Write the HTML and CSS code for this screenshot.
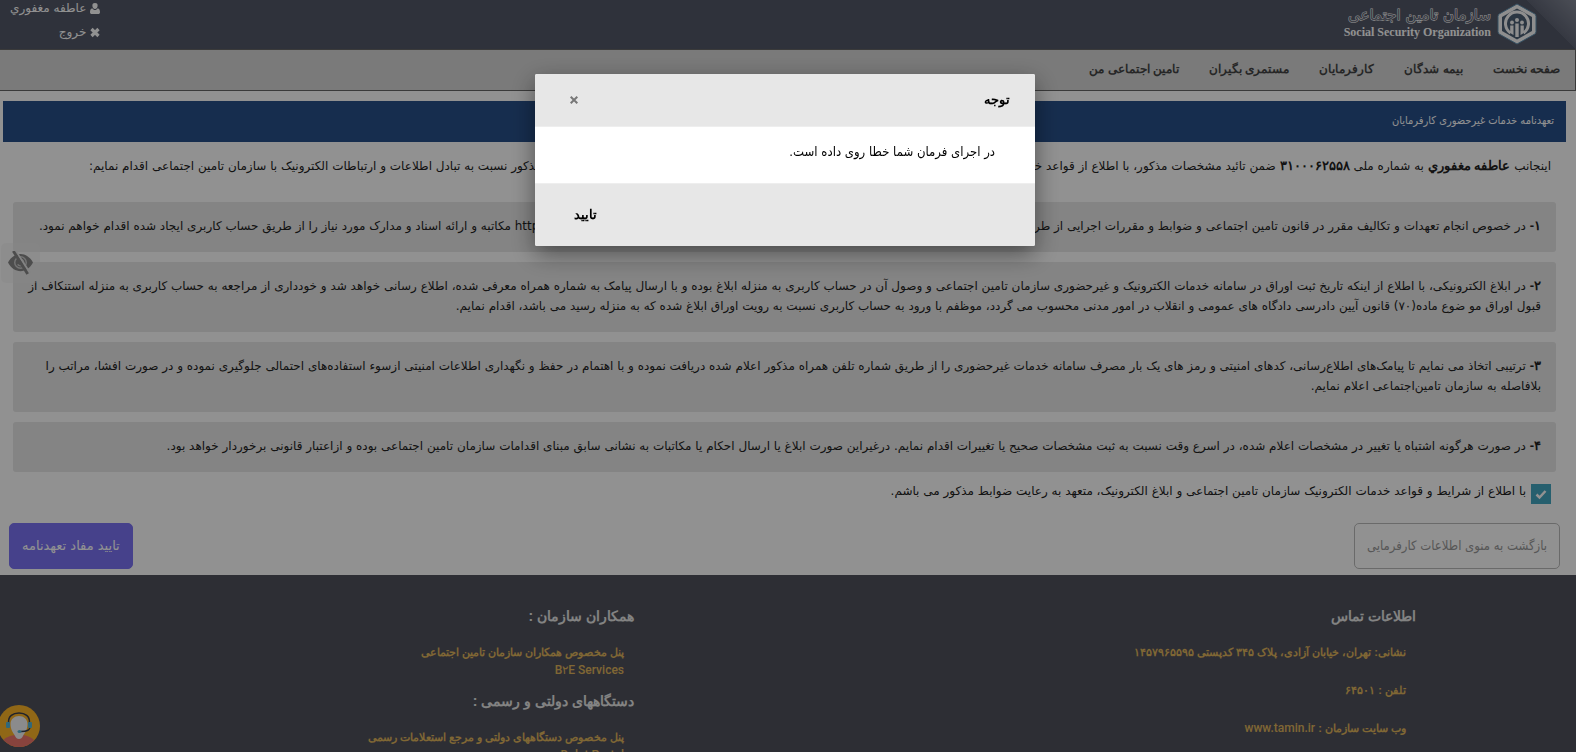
FILE: index.html
```
<!DOCTYPE html>
<html lang="fa" dir="rtl">
<head>
<meta charset="utf-8">
<title>سازمان تامین اجتماعی</title>
<link rel="stylesheet" href="styles.css">
</head>
<body>
<header class="top">
  <div class="brand">
    <svg class="brand-mark" viewBox="0 0 40 42" aria-hidden="true">
      <path d="M20 1 37 10.500a3 3 0 0 1 2 3v15a3 3 0 0 1-2 3L20 41 3 31.500a3 3 0 0 1-2-3v-15a3 3 0 0 1 2-3z" fill="#fafafa" stroke="#5f8fae" stroke-width="1"/>
      <path d="M20 5.500 35 14v14L20 36.500 5 28V14z" fill="#4c6075"/>
      <path d="M13.500 30a11.500 11.500 0 1 1 13 0" fill="none" stroke="#fafafa" stroke-width="3"/>
      <g fill="#fafafa"><circle cx="15" cy="19.500" r="1.900"/><circle cx="20" cy="17" r="2"/><circle cx="25" cy="19.500" r="1.900"/>
      <path d="M13.200 22.500h3.300v9.500l-3.300-2zM18.300 20.500h3.400V34h-3.400zM23.500 22.500h3.300V30l-3.300 2z"/></g>
    </svg>
    <div class="brand-text">
      <span class="brand-fa">سازمان تامین اجتماعی</span>
      <span class="brand-en" dir="ltr">Social Security Organization</span>
    </div>
  </div>
  <div class="user">
    <span class="user-row"><svg viewBox="0 0 10 11" class="ico" aria-hidden="true"><path d="M5 0a2.600 2.600 0 0 1 2.600 2.800C7.600 4.500 6.500 6 5 6S2.400 4.500 2.400 2.800A2.600 2.600 0 0 1 5 0zM2.300 5.200C3 6.300 4 7 5 7s2-.700 2.700-1.800C9.300 5.400 10 7 10 9.200 10 10.400 9.200 11 8.300 11H1.700C.8 11 0 10.400 0 9.200 0 7 .7 5.400 2.300 5.200z" fill="currentColor"/></svg>عاطفه مغفوري</span>
    <a class="user-row" href="#"><svg viewBox="0 0 10 10" class="ico" aria-hidden="true"><path d="M1.500 1.500l7 7M8.500 1.500l-7 7" stroke="currentColor" stroke-width="3.200"/></svg>خروج</a>
  </div>
</header>
<nav class="nav">
  <a href="#">صفحه نخست</a><a href="#">بیمه شدگان</a><a href="#">کارفرمایان</a><a href="#">مستمری بگیران</a><a href="#">تامین اجتماعی من</a>
</nav>
<main class="main">
  <h1 class="title">تعهدنامه خدمات غیرحضوری کارفرمایان</h1>
  <p class="intro">اینجانب <b>عاطفه مغفوري</b> به شماره ملی <b>۳۱۰۰۰۶۲۵۵۸</b> ضمن تائید مشخصات مذکور، با اطلاع از قواعد خدمات الکترونیک و غیرحضوری سازمان تامین اجتماعی و پذیرش شرایط و ضوابط قانونی و مقررات مذکور نسبت به تبادل اطلاعات و ارتباطات الکترونیک با سازمان تامین اجتماعی اقدام نمایم:</p>
  <div class="terms">
    <p class="term"><b>۱-</b> در خصوص انجام تعهدات و تکالیف مقرر در قانون تامین اجتماعی و ضوابط و مقررات اجرایی از طریق سامانه خدمات الکترونیک غیرحضوری سازمان تامین اجتماعی به نشانی اینترنتی <bdi>https://es.tamin.ir</bdi> مکاتبه و ارائه اسناد و مدارک مورد نیاز را از طریق حساب کاربری ایجاد شده اقدام خواهم نمود.</p>
    <p class="term"><b>۲-</b> در ابلاغ الکترونیکی، با اطلاع از اینکه تاریخ ثبت اوراق در سامانه خدمات الکترونیک و غیرحضوری سازمان تامین اجتماعی و وصول آن در حساب کاربری به منزله ابلاغ بوده و با ارسال پیامک به شماره همراه معرفی شده، اطلاع رسانی خواهد شد و خودداری از مراجعه به حساب کاربری به منزله استنکاف از قبول اوراق مو ضوع ماده(۷۰) قانون آیین دادرسی دادگاه های عمومی و انقلاب در امور مدنی محسوب می گردد، موظفم با ورود به حساب کاربری نسبت به رویت اوراق ابلاغ شده که به منزله رسید می باشد، اقدام نمایم.</p>
    <p class="term"><b>۳-</b> ترتیبی اتخاذ می نمایم تا پیامک‌های اطلاع‌رسانی، کدهای امنیتی و رمز های یک بار مصرف سامانه خدمات غیرحضوری را از طریق شماره تلفن همراه مذکور اعلام شده دریافت نموده و با اهتمام در حفظ و نگهداری اطلاعات امنیتی ازسوء استفاده‌های احتمالی جلوگیری نموده و در صورت افشا، مراتب را بلافاصله به سازمان تامین‌اجتماعی اعلام نمایم.</p>
    <p class="term"><b>۴-</b> در صورت هرگونه اشتباه یا تغییر در مشخصات اعلام شده، در اسرع وقت نسبت به ثبت مشخصات صحیح یا تغییرات اقدام نمایم. درغیراین صورت ابلاغ یا ارسال احکام یا مکاتبات به نشانی سابق مبنای اقدامات سازمان تامین اجتماعی بوده و ازاعتبار قانونی برخوردار خواهد بود.</p>
  </div>
  <label class="agree"><span class="tick"><input type="checkbox" checked><svg viewBox="0 0 20 20" aria-hidden="true"><path d="M5.500 10.500l3 3 6-6.500" fill="none" stroke="#fff" stroke-width="2.500"/></svg></span>با اطلاع از شرایط و قواعد خدمات الکترونیک سازمان تامین اجتماعی و ابلاغ الکترونیک، متعهد به رعایت ضوابط مذکور می باشم.</label>
  <div class="actions">
    <button class="btn back" type="button">بازگشت به منوی اطلاعات کارفرمایی</button>
    <button class="btn primary" type="button">تایید مفاد تعهدنامه</button>
  </div>
</main>
<footer class="footer">
  <section class="col">
    <h2>اطلاعات تماس</h2>
    <ul class="contact">
      <li>نشانی: تهران، خیابان آزادی، پلاک ۳۴۵ کدپستی ۱۴۵۷۹۶۵۵۹۵</li>
      <li>تلفن : ۶۴۵۰۱</li>
      <li>وب سایت سازمان : <a class="latin" href="#">www.tamin.ir</a></li>
    </ul>
  </section>
  <section class="col">
    <h2>همکاران سازمان :</h2>
    <ul><li><a href="#">پنل مخصوص همکاران سازمان تامین اجتماعی</a></li><li><a class="latin" href="#">B۲E Services</a></li></ul>
    <h2>دستگاههای دولتی و رسمی :</h2>
    <ul><li><a href="#">پنل مخصوص دستگاههای دولتی و مرجع استعلامات رسمی</a></li><li><a class="latin" href="#">Dolat Portal</a></li></ul>
  </section>
</footer>
<button class="eye" type="button" aria-label="دسترس پذیری">
  <svg viewBox="0 0 26 24" aria-hidden="true"><path d="M0 12C3 6 8 3 13 3s10 3 13 9c-3 6-8 9-13 9S3 18 0 12z" fill="#888"/><circle cx="13" cy="12" r="6" fill="none" stroke="#ccc" stroke-width="1.500"/><path d="M13 8.500a3.500 3.500 0 1 1-3 5.500" fill="none" stroke="#ccc" stroke-width="1.500"/><path d="M8 0l15 23" stroke="#e8e8e8" stroke-width="2"/><path d="M5.500 0l15 24" stroke="#888" stroke-width="3"/></svg>
</button>
<button class="chat" type="button" aria-label="پشتیبانی">
  <svg viewBox="0 0 42 42" aria-hidden="true"><clipPath id="c"><circle cx="21" cy="21" r="21"/></clipPath><g clip-path="url(#c)"><path d="M0 0h42v42H0z" fill="#fdb528"/><path d="M4 38c2-6 8-7 12-8h10c4 1 10 3 12 8v4H4z" fill="#f0776c"/><path d="M12.500 19c0-5 4-8 8.500-8s8.500 3 8.500 8c0 6-3 9-4.500 12-1 2-2 3-4 3s-3-1-4-3c-1.500-3-4.500-6-4.500-12z" fill="#f4f4f6"/><path d="M10.500 18C10 11 15 8 21 8s11 3 10.500 10M32 22c0 3-3 4.500-9 4.500" fill="none" stroke="#3b3f4d" stroke-width="1.500"/><rect x="8" y="17" width="4" height="6" rx="1" fill="#57b8d6"/><rect x="30" y="17" width="4" height="6" rx="1" fill="#57b8d6"/><ellipse cx="21.500" cy="26.500" rx="2" ry="1.500" fill="#57b8d6"/></g></svg>
</button>
<div class="overlay">
  <div class="dialog" role="dialog" aria-labelledby="dlg-title">
    <div class="dialog-head"><h2 id="dlg-title">توجه</h2><button class="close" type="button" aria-label="بستن"><svg viewBox="0 0 8 8" aria-hidden="true"><path d="M.7.7l6.600 6.600M7.300.7L.7 7.300" stroke="currentColor" stroke-width="2"/></svg></button></div>
    <p class="dialog-body">در اجرای فرمان شما خطا روی داده است.</p>
    <div class="dialog-foot"><button class="ok" type="button">تایید</button></div>
  </div>
</div>
</body>
</html>
```

FILE: styles.css
```
* { box-sizing: border-box; }
html, body { height: 100%; }
body {
  display: flex;
  flex-direction: column;
  margin: 0;
  overflow: hidden;
  background: #fff;
  color: #222;
  font: 12px/20px "DejaVu Sans", sans-serif;
}
h1, h2, p, ul { margin: 0; padding: 0; font-size: 12px; }
ul { list-style: none; }
a { color: inherit; text-decoration: none; }
b { font: bold 13px/1 "Liberation Sans", sans-serif; }
button { font: inherit; border: 0; cursor: pointer; }

.top {
  display: flex;
  flex: none;
  justify-content: space-between;
  height: 49px;
  padding: 0 39px 0 10px;
  background: linear-gradient(45deg, transparent 50%, #5f6474 50%, #858a98 100%) right / 50px 50px no-repeat, #545969;
  color: #fff;
}
.brand { display: flex; gap: 6px; align-items: center; height: 48px; }
.brand-mark { width: 40px; height: 42px; }
.brand-text { display: flex; flex-direction: column; padding-bottom: 4px; }
.brand-fa { font-size: 15px; line-height: 20px; color: #6a6f7d; -webkit-text-stroke: 1px #fff; paint-order: stroke fill; }
.brand-en { font: bold 12px/14px "Liberation Serif", serif; }
.user { display: flex; flex-direction: column; gap: 4px; }
.user-row { display: flex; align-items: center; gap: 4px; height: 20px; line-height: 16px; padding-bottom: 4px; }
.ico { width: 10px; height: 11px; }

.nav {
  display: flex;
  flex: none;
  gap: 30px;
  height: 42px;
  padding: 0 15px;
  border: solid #666;
  border-width: 1px 1px 1px 0;
  background: #d6d6d6;
  font: bold 12px/38px "Liberation Sans", sans-serif;
  color: #444;
}
.main { flex: none; padding: 10px 10px 6px 3px; }
.title { height: 41px; padding: 0 12px; background: #28508a; color: #fff; font: 11px/40px "DejaVu Sans Condensed", "DejaVu Sans", sans-serif; }
.intro { padding: 14px 15px 26px; }
.terms { display: flex; flex-direction: column; gap: 10px; padding: 0 10px; }
.term { padding: 14px 15px 16px 10px; border-radius: 3px; background: #e8e8e8; }
.agree { display: flex; gap: 5px; padding: 9px 15px 0; }
.tick { position: relative; width: 20px; height: 20px; margin-top: 3px; }
.tick input { appearance: none; display: block; width: 20px; height: 20px; margin: 0; background: #43a7c2; }
.tick svg { position: absolute; inset: 0; }
.actions { display: flex; justify-content: space-between; padding: 19px 6px 0; }
.btn { height: 46px; padding: 0 12px; border: 1px solid #bbb; border-radius: 5px; background: transparent; color: #999; font-size: 13px; }
.back { font-family: "DejaVu Sans Condensed", "DejaVu Sans", sans-serif; }
.primary { border-color: #7b72f5; background: #7b72f5; color: #fff; }

.footer { display: grid; flex: 1; grid-template-columns: 1fr 1fr; min-height: 0; overflow: hidden; padding-top: 31px; background: #50525c; font-family: "Liberation Sans", sans-serif; }
.col { padding-right: 160px; }
.col + .col { padding-right: 154px; }
.col h2 { font-size: 14px; line-height: 20px; color: #e6e6e6; }
.col ul { padding: 17px 10px 12px; font-weight: bold; font-size: 11px; line-height: 18px; color: #e0b65c; }
.col .contact { display: flex; flex-direction: column; gap: 20px; }
.col .latin { font-family: Roboto, "Liberation Sans", sans-serif; font-size: 12px; font-weight: 500; line-height: 1; }

.eye { position: fixed; left: 1px; top: 243px; width: 39px; height: 40px; padding: 8px 7px; border-radius: 5px; background: rgba(238, 238, 238, .4); }
.chat { position: fixed; left: -2px; top: 705px; width: 42px; height: 42px; padding: 0; background: none; }
.eye svg, .chat svg { display: block; }

.overlay { position: fixed; inset: 0; display: flex; justify-content: center; align-items: flex-start; padding-top: 74px; padding-right: 6px; background: rgba(0, 0, 0, .43); }
.dialog { width: 500px; border-radius: 2px; overflow: hidden; background: #fff; color: #000; box-shadow: 0 8px 24px rgba(0, 0, 0, .45); }
.dialog-head { display: flex; justify-content: space-between; align-items: center; height: 53px; padding: 0 25px 0 35px; border-bottom: 1px solid #eee; background: #e7e7e7; }
.dialog h2, .ok { font: bold 13px/20px "Liberation Sans", sans-serif; }
.close { width: 8px; height: 8px; padding: 0; background: none; color: #777; }
.close svg { display: block; }
.dialog-body { padding: 15px 40px 21px; font: 13px/20px "DejaVu Sans Condensed", "DejaVu Sans", sans-serif; }
.dialog-foot { display: flex; justify-content: flex-end; height: 63px; padding: 0 39px; border-top: 1px solid #eee; background: #e7e7e7; }
.ok { padding: 0; background: none; }
```
